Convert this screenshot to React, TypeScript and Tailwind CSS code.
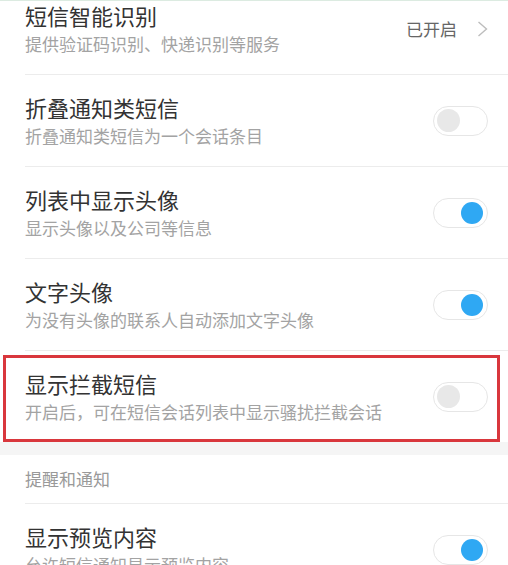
import React from "react";

type Row = {
  title: string;
  desc: string;
  on?: boolean;
  value?: string;
};

const ROWS: Row[] = [
  { title: "折叠通知类短信", desc: "折叠通知类短信为一个会话条目", on: false },
  { title: "列表中显示头像", desc: "显示头像以及公司等信息", on: true },
  { title: "文字头像", desc: "为没有头像的联系人自动添加文字头像", on: true },
];

function Toggle({ on }: { on: boolean }) {
  return (
    <div
      className={
        "flex h-[30px] w-[55px] shrink-0 items-center rounded-full border-[1.5px] border-[#e6e6e6] bg-white " +
        (on ? "justify-end pr-[4px]" : "justify-start pl-[3px]")
      }
    >
      <div
        className={
          on
            ? "h-[22px] w-[22px] rounded-full bg-[#2fa8f3]"
            : "h-[23px] w-[23px] rounded-full bg-[#e8e8e8]"
        }
      />
    </div>
  );
}

function SettingRow({ row, first }: { row: Row; first?: boolean }) {
  return (
    <div className={"flex h-[91px] items-center pl-[25px] pr-[20px] " + (first ? "mt-[-18px]" : "")}>
      <div className="flex flex-1 flex-col self-start pt-[18px]">
        <div className="text-[22px] leading-[28px] text-[#333333]">{row.title}</div>
        <div className="mt-[3px] text-[17px] leading-[24px] text-[#a3a3a3]">{row.desc}</div>
      </div>
      {row.value ? (
        <div className="flex items-center gap-[20px]">
          <span className="text-[17px] text-[#666666]">{row.value}</span>
          <svg width="11" height="16" viewBox="0 0 11 16" fill="none">
            <polyline points="1.5,1 9.5,8 1.5,15" stroke="#bdbdbd" strokeWidth="1.4" />
          </svg>
        </div>
      ) : (
        <Toggle on={!!row.on} />
      )}
    </div>
  );
}

function Divider() {
  return <div className="ml-[25px] h-px bg-[#ececec]" />;
}

export default function App() {
  return (
    <div
      className="h-[565px] w-[508px] overflow-hidden border-t border-[#dcebe1] bg-white"
      style={{ fontFamily: '"Noto Sans CJK SC", "Noto Sans", sans-serif' }}
    >
      <SettingRow
        first
        row={{ title: "短信智能识别", desc: "提供验证码识别、快递识别等服务", value: "已开启" }}
      />
      {ROWS.map((r) => (
        <React.Fragment key={r.title}>
          <Divider />
          <SettingRow row={r} />
        </React.Fragment>
      ))}
      <Divider />
      <div className="relative">
        <SettingRow
          row={{ title: "显示拦截短信", desc: "开启后，可在短信会话列表中显示骚扰拦截会话", on: false }}
        />
        <div className="pointer-events-none absolute left-[3px] right-[8px] top-[4px] bottom-0 border-[3px] border-[#d9373d]" />
      </div>

      {/* 提醒和通知 */}
      <div className="h-[13px] bg-[#f5f5f5]" />
      <div className="flex h-[48px] items-center pl-[25px] text-[17px] text-[#999999]">提醒和通知</div>
      <Divider />
      <SettingRow row={{ title: "显示预览内容", desc: "允许短信通知显示预览内容", on: true }} />
    </div>
  );
}
